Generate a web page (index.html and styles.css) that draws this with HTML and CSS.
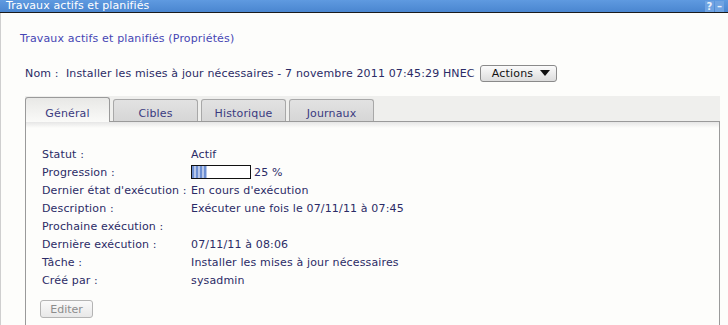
FILE: index.html
```html
<!DOCTYPE html>
<html lang="fr">
<head>
<meta charset="utf-8">
<title>Travaux actifs et planifiés</title>
<link rel="stylesheet" href="styles.css">
</head>
<body>
<div class="titlebar">
  <span class="title">Travaux actifs et planifiés</span>
  <span class="tb-icons"><span class="tb-btn">?</span><span class="tb-btn">–</span></span>
</div>
<div class="page">
  <div class="crumb">Travaux actifs et planifiés (Propriétés)</div>
  <div class="namerow">
    <span class="name">Nom :&nbsp; Installer les mises à jour nécessaires - 7 novembre 2011 07:45:29 HNEC</span>
    <button class="actions">Actions <span class="caret"></span></button>
  </div>
  <div class="tabstrip">
    <div class="tab active">Général</div>
    <div class="tab">Cibles</div>
    <div class="tab">Historique</div>
    <div class="tab">Journaux</div>
  </div>
  <div class="panel">
    <div class="props">
      <div class="lbl">Statut :</div><div class="val">Actif</div>
      <div class="lbl">Progression :</div><div class="val"><span class="bar"><span class="fill" style="width:25%"></span></span><span class="pct">25 %</span></div>
      <div class="lbl">Dernier état d'exécution :</div><div class="val">En cours d'exécution</div>
      <div class="lbl">Description :</div><div class="val">Exécuter une fois le 07/11/11 à 07:45</div>
      <div class="lbl">Prochaine exécution :</div><div class="val"></div>
      <div class="lbl">Dernière exécution :</div><div class="val">07/11/11 à 08:06</div>
      <div class="lbl">Tâche :</div><div class="val">Installer les mises à jour nécessaires</div>
      <div class="lbl">Créé par :</div><div class="val">sysadmin</div>
    </div>
    <button class="edit" disabled>Editer</button>
  </div>
</div>
</body>
</html>
```
FILE: styles.css
```css
html, body {
  margin: 0;
  padding: 0;
  background: #fdfdfb;
  font-family: "DejaVu Sans", Verdana, sans-serif;
  font-size: 11px;
  letter-spacing: 0.15px;
  color: #2b2b66;
  height: 100%;
  overflow: hidden;
}
.titlebar {
  height: 12px;
  line-height: 12px;
  background: linear-gradient(#5f9ae0, #4a86d0);
  border-bottom: 1px solid #1b1b1b;
  color: #ffffff;
  display: flex;
  justify-content: space-between;
  align-items: center;
  padding-left: 6px;
  font-size: 11px;
  letter-spacing: 0.1px;
}
.tb-icons {
  display: flex;
  gap: 1px;
  margin-right: 4px;
}
.tb-btn {
  width: 9px;
  height: 11px;
  background: #6fa3e2;
  color: #e8f0fb;
  font-weight: bold;
  font-size: 10px;
  line-height: 11px;
  text-align: center;
  letter-spacing: 0;
}
.page {
  border-left: 1px solid #cfcfcf;
  height: calc(100% - 13px);
  padding: 0 7px 0 24px;
  box-sizing: border-box;
}
.crumb {
  padding-top: 19px;
  margin-left: -5px;
  line-height: 14px;
  color: #4646b4;
}
.namerow {
  display: flex;
  align-items: center;
  margin-top: 18px;
  height: 18px;
  color: #2b2b66;
}
.name {
  white-space: pre;
}
.actions {
  margin-left: 5px;
  height: 17px;
  width: 77px;
  padding: 0 6px 0 11px;
  border: 1px solid #8a8a8a;
  border-radius: 3px;
  background: linear-gradient(#fbfbfb, #dcdcdc);
  font-family: "DejaVu Sans", Verdana, sans-serif;
  font-size: 11px;
  letter-spacing: 0.2px;
  color: #111;
  display: flex;
  align-items: center;
  justify-content: space-between;
}
.caret {
  width: 0;
  height: 0;
  border-left: 5px solid transparent;
  border-right: 5px solid transparent;
  border-top: 6px solid #111;
}
.tabstrip {
  margin-top: 14px;
  background: #efefed;
  height: 25px;
  display: flex;
  align-items: flex-end;
  gap: 3px;
  width: 695px;
}
.tab {
  width: 85px;
  height: 22px;
  box-sizing: border-box;
  border: 1px solid #a8a8a8;
  border-bottom: none;
  border-radius: 3px 3px 0 0;
  background: linear-gradient(#e2e2e2, #d6d6d6);
  color: #3a3a80;
  text-align: center;
  line-height: 27px;
}
.tab.active {
  width: 85px;
  height: 25px;
  background: linear-gradient(#e8e8e6, #fafaf8);
  border-color: #9a9a9a;
  line-height: 31px;
  margin-bottom: -1px;
  position: relative;
  z-index: 1;
}
.panel {
  width: 695px;
  box-sizing: border-box;
  border: 1px solid #9a9a9a;
  border-bottom: none;
  height: 210px;
  background: linear-gradient(#e6e6e6 0px, #fdfdfb 6px);
  padding: 23px 0 0 16px;
}
.props {
  display: grid;
  grid-template-columns: 149px 1fr;
  grid-auto-rows: 18px;
  align-items: center;
}
.val {
  display: flex;
  align-items: center;
}
.bar {
  display: inline-block;
  width: 58px;
  height: 12px;
  border: 1px solid #111;
  background: #ffffff;
  overflow: hidden;
}
.fill {
  display: block;
  height: 100%;
  background: repeating-linear-gradient(90deg, #6d8fd2 0 2px, #b8c8ea 2px 4px);
}
.pct {
  margin-left: 3px;
}
.edit {
  margin-top: 11px;
  margin-left: -2px;
  width: 53px;
  height: 18px;
  border: 1px solid #b4b4b4;
  border-radius: 3px;
  background: linear-gradient(#fafafa, #e8e8e8);
  color: #8c8c8c;
  font-family: "DejaVu Sans", Verdana, sans-serif;
  font-size: 11px;
}
```
